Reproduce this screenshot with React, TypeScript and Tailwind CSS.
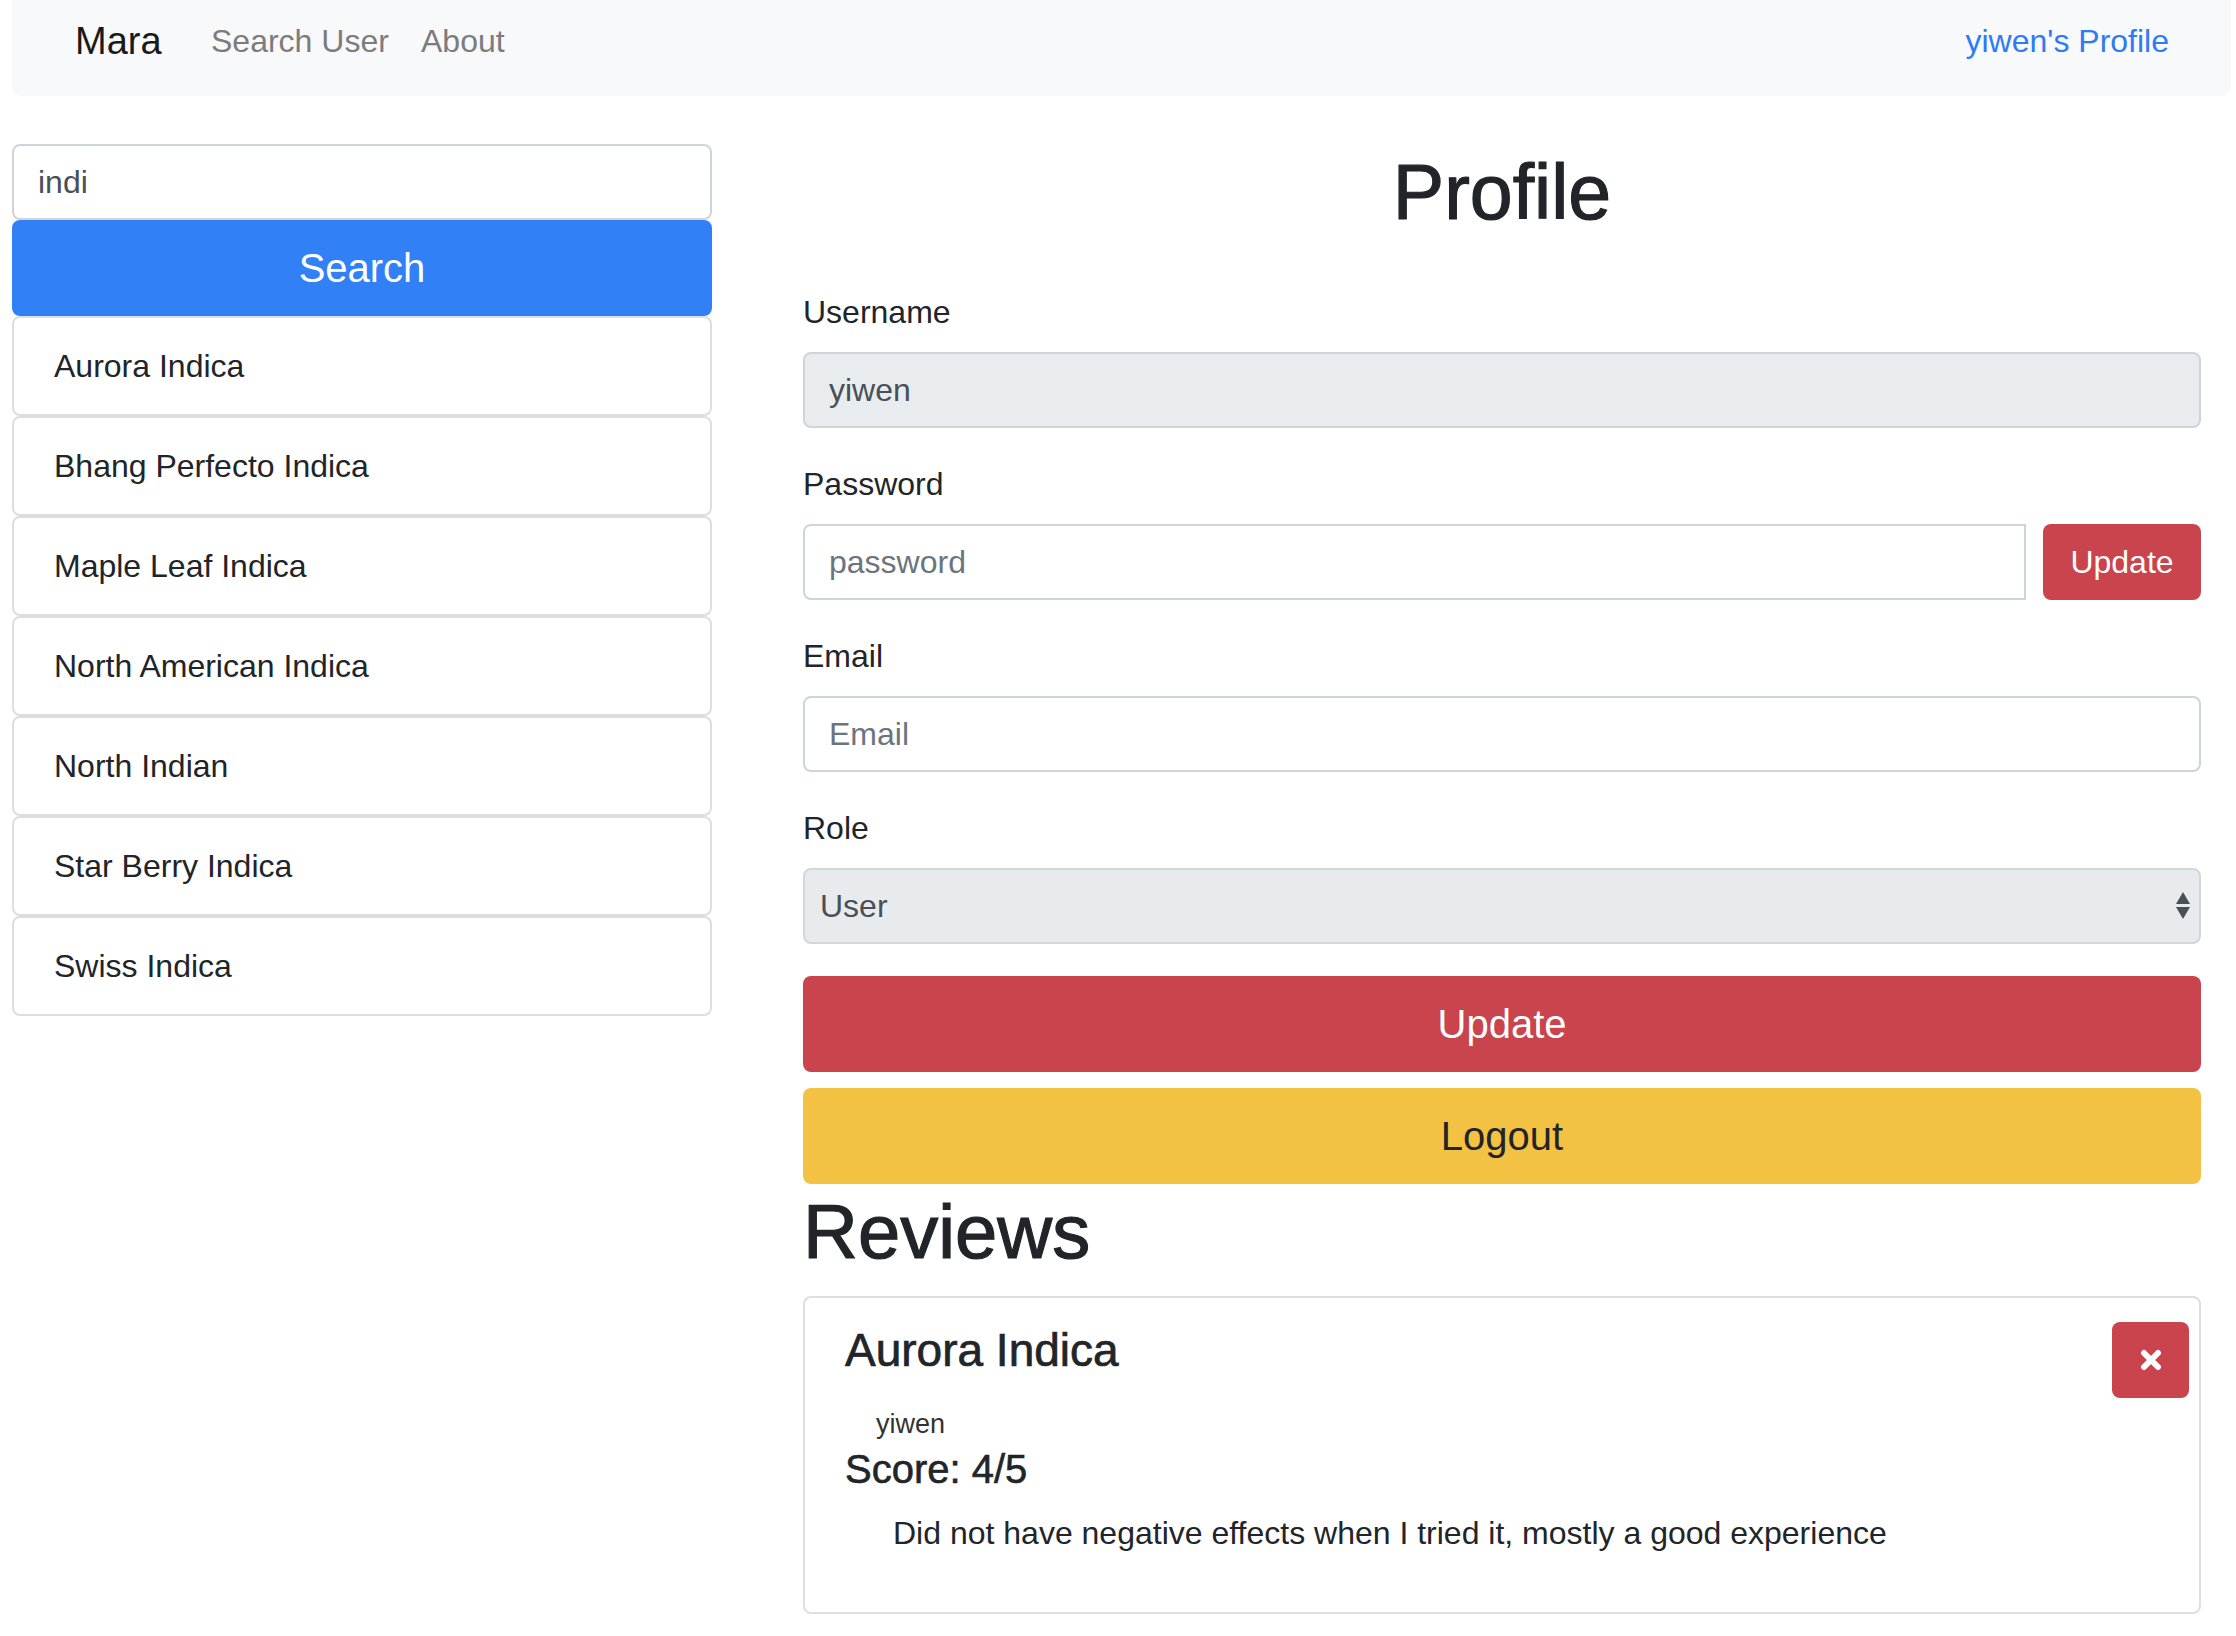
import { useState } from "react";

const strains = [
  "Aurora Indica",
  "Bhang Perfecto Indica",
  "Maple Leaf Indica",
  "North American Indica",
  "North Indian",
  "Star Berry Indica",
  "Swiss Indica",
];

function Field({ label, children }: { label: string; children: React.ReactNode }) {
  return (
    <div className="mb-[32px]">
      <label className="mb-[16px] block text-[32px] leading-[48px]">{label}</label>
      {children}
    </div>
  );
}

export default function App() {
  const [query, setQuery] = useState("indi");

  return (
    <div className="min-h-screen bg-white font-['Liberation_Sans',Arial,sans-serif] text-[#212529]">
      {/* Navbar */}
      <nav className="ml-[12px] flex h-[96px] w-[2219px] items-center rounded-b-[10px] bg-[#f8f9fa] pb-[15px] pl-[63px] pr-[62px] text-[32px] leading-[48px]">
        <a className="w-[136px] text-[38px] text-[#1a1a1a]">Mara</a>
        <a className="w-[210px] text-[#7c7c7d]">Search User</a>
        <a className="text-[#7c7c7d]">About</a>
        <a className="ml-auto text-[#2f7bf5]">yiwen's Profile</a>
      </nav>

      <div className="flex gap-[91px] pl-[12px] pt-[48px]">
        {/* Search column */}
        <div className="w-[700px]">
          <input
            value={query}
            onChange={(e) => setQuery(e.target.value)}
            className="block h-[76px] w-full rounded-[8px] border-2 border-[#ced4da] bg-white px-[24px] text-[32px] text-[#495057] outline-none"
          />
          <button className="block h-[96px] w-full rounded-[8px] bg-[#3180f6] text-[40px] text-white">
            Search
          </button>
          {strains.map((s) => (
            <div
              key={s}
              className="flex h-[100px] items-center rounded-[8px] border-2 border-[#dedede] bg-white pl-[40px] text-[32px]"
            >
              {s}
            </div>
          ))}
        </div>

        {/* Profile column */}
        <div className="w-[1398px]">
          <h1 className="mb-[48px] text-center text-[77px] font-medium leading-[96px] [-webkit-text-stroke:1.2px_#212529]">
            Profile
          </h1>

          <Field label="Username">
            <input
              disabled
              value="yiwen"
              className="block h-[76px] w-full rounded-[8px] border-2 border-[#ced4da] bg-[#e9ecef] px-[24px] text-[32px] text-[#495057]"
            />
          </Field>

          <Field label="Password">
            <div className="flex gap-[17px]">
              <input
                placeholder="password"
                className="block h-[76px] flex-1 rounded-l-[8px] border-2 border-[#ced4da] bg-white px-[24px] text-[32px] text-[#495057] outline-none placeholder:text-[#6c757d]"
              />
              <button className="h-[76px] w-[158px] rounded-[8px] bg-[#c9444c] text-[32px] text-white">
                Update
              </button>
            </div>
          </Field>

          <Field label="Email">
            <input
              placeholder="Email"
              className="block h-[76px] w-full rounded-[8px] border-2 border-[#ced4da] bg-white px-[24px] text-[32px] text-[#495057] outline-none placeholder:text-[#6c757d]"
            />
          </Field>

          <Field label="Role">
            <div className="flex h-[76px] items-center justify-between rounded-[8px] border-2 border-[#d3d7db] bg-[#e8ebee] pl-[15px] pr-[8px] text-[32px] text-[#495057]">
              <span>User</span>
              <svg width="16" height="30" viewBox="0 0 16 30" fill="#495057">
                <path d="M8 1 L15 13 L1 13 Z" />
                <path d="M1 16 L15 16 L8 28 Z" />
              </svg>
            </div>
          </Field>

          <button className="mb-[16px] block h-[96px] w-full rounded-[8px] bg-[#c9444c] text-[40px] text-white">
            Update
          </button>
          <button className="block h-[96px] w-full rounded-[8px] bg-[#f3c243] text-[40px] text-[#212529]">
            Logout
          </button>

          <h1 className="mb-[16px] text-[76px] font-medium leading-[96px] [-webkit-text-stroke:1.2px_#212529]">
            Reviews
          </h1>

          {/* Review card */}
          <div className="h-[318px] rounded-[8px] border-2 border-[#dfdfdf] pl-[40px] pr-[10px] pt-[24px]">
            <div className="flex items-start justify-between">
              <h4 className="mt-[4px] text-[46px] font-medium leading-[48px] [-webkit-text-stroke:0.7px_#212529]">
                Aurora Indica
              </h4>
              <button className="flex h-[76px] w-[77px] items-center justify-center rounded-[8px] bg-[#c9444c]">
                <svg width="22" height="22" viewBox="0 0 22 22">
                  <path d="M4 4 L18 18 M18 4 L4 18" stroke="white" strokeWidth="6" strokeLinecap="round" />
                </svg>
              </button>
            </div>
            <p className="mt-[8px] pl-[31px] text-[27px] leading-[36px] text-[#333]">yiwen</p>
            <h5 className="mt-[3px] text-[40px] font-medium leading-[48px] [-webkit-text-stroke:0.6px_#212529]">
              Score: 4/5
            </h5>
            <p className="mt-[16px] pl-[48px] text-[32px] leading-[48px]">
              Did not have negative effects when I tried it, mostly a good experience
            </p>
          </div>
        </div>
      </div>
    </div>
  );
}
